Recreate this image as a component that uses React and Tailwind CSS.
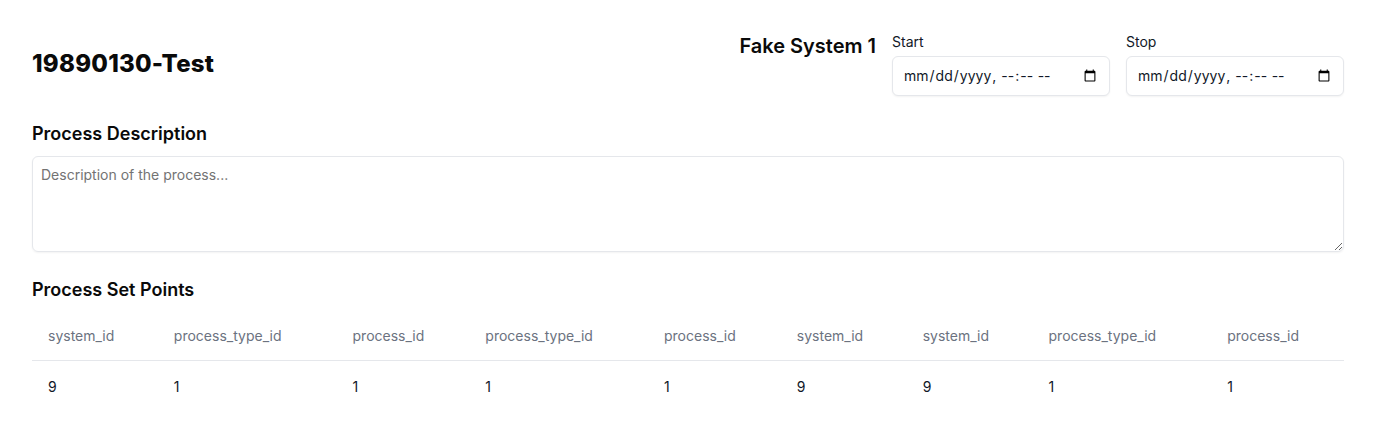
const columns = [
  "system_id",
  "process_type_id",
  "process_id",
  "process_type_id",
  "process_id",
  "system_id",
  "system_id",
  "process_type_id",
  "process_id",
];

const values = ["9", "1", "1", "1", "1", "9", "9", "1", "1"];

const DateField = ({ label }) => (
  <div className="flex flex-col w-[218px]">
    <label className="text-sm leading-5 mb-1 text-[#111827]">{label}</label>
    <input
      type="datetime-local"
      className="h-10 w-full rounded-md border border-[#e5e7eb] bg-white px-2.5 text-sm text-[#111827] shadow-xs"
    />
  </div>
);

export default function App() {
  return (
    <div className="min-h-screen bg-white px-8 pt-8 font-['Inter',sans-serif] text-[#0a0a0a]">
      {/* Header */}
      <div className="flex items-center justify-between">
        <h1 className="text-2xl font-extrabold tracking-[0.25px]">19890130-Test</h1>
        <div className="flex items-start gap-4">
          <h2 className="text-xl leading-7 font-semibold">Fake System 1</h2>
          <DateField label="Start" />
          <DateField label="Stop" />
        </div>
      </div>

      {/* Description */}
      <h3 className="mt-6 text-lg leading-7 font-semibold">Process Description</h3>
      <textarea
        placeholder="Description of the process..."
        className="mt-2 block h-24 w-full rounded-md border border-[#e5e7eb] px-2 py-2 text-sm placeholder:text-[#737373] shadow-xs"
      />

      {/* Set points */}
      <h3 className="mt-6 text-lg leading-7 font-semibold">Process Set Points</h3>
      <table className="mt-2 w-full text-sm">
        <thead>
          <tr className="border-b border-[#e5e7eb]">
            {columns.map((c, i) => (
              <th key={i} className="h-12 px-4 text-left font-normal text-[#6b7280]">
                {c}
              </th>
            ))}
          </tr>
        </thead>
        <tbody>
          <tr>
            {values.map((v, i) => (
              <td key={i} className="p-4 text-[#111827]">
                {v}
              </td>
            ))}
          </tr>
        </tbody>
      </table>
    </div>
  );
}
